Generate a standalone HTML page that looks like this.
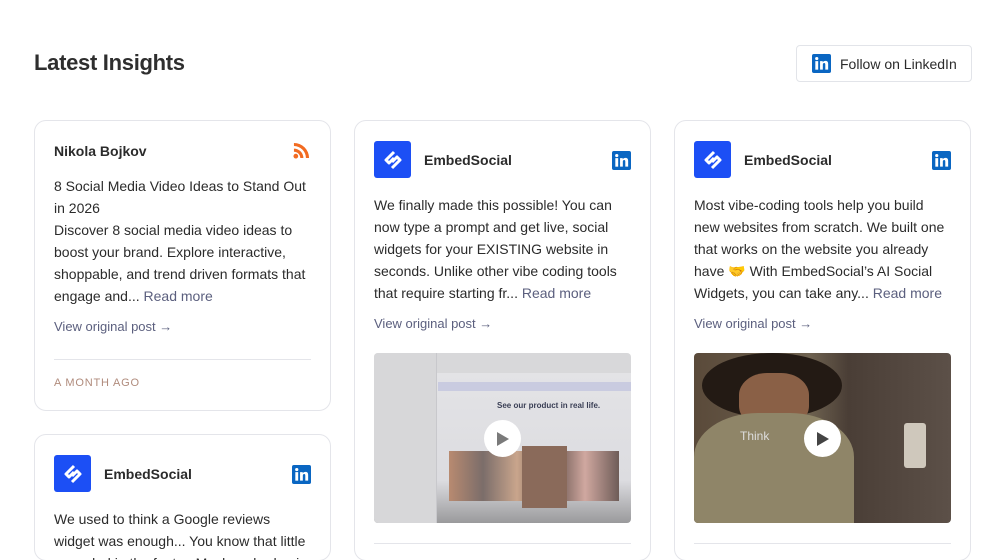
<!DOCTYPE html>
<html><head><meta charset="utf-8"><style>
*{box-sizing:border-box;margin:0;padding:0}
html,body{width:1000px;height:560px;overflow:hidden}
body{background:#fff;font-family:"Liberation Sans",Arial,sans-serif;color:#2b2b2b;position:relative}
.h{position:absolute;left:34px;top:50px;font-size:22px;font-weight:bold;color:#2e2e2e;letter-spacing:-0.3px}
.btn{position:absolute;left:796px;top:45px;width:176px;height:37px;border:1px solid #e2e4e9;border-radius:4px;display:flex;align-items:center;padding-left:15px;font-size:14px;color:#2b2b2b}
.btn svg{margin-right:9px}
.card{position:absolute;width:297px;border:1px solid #e4e5ea;border-radius:12px;background:#fff;overflow:hidden}
.name{position:absolute;font-size:14px;font-weight:bold;color:#2b2b2b}
.txt{position:absolute;left:19px;width:255px;font-size:14px;line-height:22px;color:#2b2b2b}
.rm{color:#5b5f7e}
.vo{position:absolute;left:19px;font-size:13px;color:#5b5f7e}
.div{position:absolute;left:19px;right:19px;height:1px;background:#e4e5ea}
.logo{position:absolute;left:19px;width:37px;height:37px;border-radius:3px;background:#1c4ff5;display:flex;align-items:center;justify-content:center}
.li{position:absolute;right:19px}
.img{position:absolute;left:19px;width:257px;height:170px;border-radius:4px;overflow:hidden}
.play{position:absolute;left:110px;top:67px;width:37px;height:37px;border-radius:50%;background:#fff;display:flex;align-items:center;justify-content:center}
</style></head><body>
<div class="h">Latest Insights</div>
<div class="btn"><svg width="19" height="19" viewBox="0 0 20 20"><rect width="20" height="20" rx="2" fill="#0a66c2"/><rect x="3.5" y="7.5" width="3" height="9" fill="#fff"/><circle cx="5" cy="4.8" r="1.7" fill="#fff"/><path d="M8.5 7.5h2.8v1.3c.5-.9 1.6-1.5 2.9-1.5 2.200 0 2.8 1.4 2.8 3.3v5.9h-3v-5.2c0-1-.2-1.8-1.2-1.8s-1.4.8-1.4 1.8v5.2h-2.9z" fill="#fff"/></svg>Follow on LinkedIn</div>

<div class="card" style="left:34px;top:120px;height:291px">
 <div class="name" style="left:19px;top:22px">Nikola Bojkov</div>
 <svg style="position:absolute;right:20px;top:21px" width="17" height="17" viewBox="0 0 18 18"><circle cx="3" cy="15" r="2.5" fill="#f26b21"/><path d="M1 7a10 10 0 0 1 10 10h-3.3A6.7 6.7 0 0 0 1 10.3z" fill="#f26b21"/><path d="M1 1a16 16 0 0 1 16 16h-3.3A12.7 12.7 0 0 0 1 4.3z" fill="#f26b21"/></svg>
 <div class="txt" style="top:54px">8 Social Media Video Ideas to Stand Out in 2026<br>Discover 8 social media video ideas to boost your brand. Explore interactive, shoppable, and trend driven formats that engage and... <span class="rm">Read more</span></div>
 <div class="vo" style="top:198px">View original post →</div>
 <div class="div" style="top:238px"></div>
 <div style="position:absolute;left:19px;top:256px;font-size:11px;letter-spacing:0.8px;color:#b08b7c">A MONTH AGO</div>
</div>

<div class="card" style="left:34px;top:434px;height:127px">
 <div class="logo" style="top:20px"><svg width="20" height="20" viewBox="0 0 20 20"><path d="M11 2L3 10l3 3 5-5 M9 18l8-8-3-3-5 5" stroke="#fff" stroke-width="3" fill="none" stroke-linejoin="round"/></svg></div>
 <div class="name" style="left:69px;top:31px">EmbedSocial</div>
 <svg class="li" style="top:30px" width="19" height="19" viewBox="0 0 20 20"><rect width="20" height="20" rx="2" fill="#0a66c2"/><rect x="3.5" y="7.5" width="3" height="9" fill="#fff"/><circle cx="5" cy="4.8" r="1.7" fill="#fff"/><path d="M8.5 7.5h2.8v1.3c.5-.9 1.6-1.5 2.9-1.5 2.2 0 2.8 1.4 2.8 3.3v5.9h-3v-5.2c0-1-.2-1.8-1.2-1.8s-1.4.8-1.4 1.8v5.2h-2.9z" fill="#fff"/></svg>
 <div class="txt" style="top:73px">We used to think a Google reviews widget was enough... You know that little snuggled in the footer. Maybe a badge in</div>
</div>

<div class="card" style="left:354px;top:120px;height:441px">
 <div class="logo" style="top:20px"><svg width="20" height="20" viewBox="0 0 20 20"><path d="M11 2L3 10l3 3 5-5 M9 18l8-8-3-3-5 5" stroke="#fff" stroke-width="3" fill="none" stroke-linejoin="round"/></svg></div>
 <div class="name" style="left:69px;top:31px">EmbedSocial</div>
 <svg class="li" style="top:30px" width="19" height="19" viewBox="0 0 20 20"><rect width="20" height="20" rx="2" fill="#0a66c2"/><rect x="3.5" y="7.5" width="3" height="9" fill="#fff"/><circle cx="5" cy="4.8" r="1.7" fill="#fff"/><path d="M8.5 7.5h2.8v1.3c.5-.9 1.6-1.5 2.9-1.5 2.2 0 2.8 1.4 2.8 3.3v5.9h-3v-5.2c0-1-.2-1.8-1.2-1.8s-1.4.8-1.4 1.8v5.2h-2.9z" fill="#fff"/></svg>
 <div class="txt" style="top:73px">We finally made this possible! You can now type a prompt and get live, social widgets for your EXISTING website in seconds. Unlike other vibe coding tools that require starting fr... <span class="rm">Read more</span></div>
 <div class="vo" style="top:195px">View original post →</div>
 <div class="img" style="top:232px;background:linear-gradient(#d8d8da 0,#d8d8da 20px,#e3e3e6 20px,#dcdce0 75%,#9a9a9c 100%)">
  <div style="position:absolute;left:0;top:0;width:63px;height:170px;background:#d7d7d9;border-right:1px solid #c8c8cc"></div>
  <div style="position:absolute;left:64px;top:29px;width:193px;height:9px;background:#c9cbe0"></div>
  <div style="position:absolute;left:123px;top:48px;font-size:8px;font-weight:bold;color:#3a3f55">See our product in real life.</div>
  <div style="position:absolute;left:75px;top:98px;width:170px;height:50px;background:linear-gradient(90deg,#b88a70,#7b6d6a,#c9a58c,#5a4a44,#d0a8a0,#6e5c58)"></div>
  <div style="position:absolute;left:148px;top:93px;width:45px;height:62px;background:#8a6a5a"></div>
  <div class="play"><svg width="14" height="16" viewBox="0 0 14 16"><path d="M1 1l12 7-12 7z" fill="#7a7a7a"/></svg></div>
 </div>
 <div class="div" style="top:422px"></div>
</div>

<div class="card" style="left:674px;top:120px;height:441px">
 <div class="logo" style="top:20px"><svg width="20" height="20" viewBox="0 0 20 20"><path d="M11 2L3 10l3 3 5-5 M9 18l8-8-3-3-5 5" stroke="#fff" stroke-width="3" fill="none" stroke-linejoin="round"/></svg></div>
 <div class="name" style="left:69px;top:31px">EmbedSocial</div>
 <svg class="li" style="top:30px" width="19" height="19" viewBox="0 0 20 20"><rect width="20" height="20" rx="2" fill="#0a66c2"/><rect x="3.5" y="7.5" width="3" height="9" fill="#fff"/><circle cx="5" cy="4.8" r="1.7" fill="#fff"/><path d="M8.5 7.5h2.8v1.3c.5-.9 1.6-1.5 2.9-1.5 2.2 0 2.8 1.4 2.8 3.3v5.9h-3v-5.2c0-1-.2-1.8-1.2-1.8s-1.4.8-1.4 1.8v5.2h-2.9z" fill="#fff"/></svg>
 <div class="txt" style="top:73px">Most vibe-coding tools help you build new websites from scratch. We built one that works on the website you already have 🤝 With EmbedSocial’s AI Social Widgets, you can take any... <span class="rm">Read more</span></div>
 <div class="vo" style="top:195px">View original post →</div>
 <div class="img" style="top:232px;background:linear-gradient(90deg,#5a4a3a 0%,#6e6250 45%,#4a3e36 60%,#5c5048 100%)">
  <div style="position:absolute;left:8px;top:0;width:140px;height:65px;border-radius:50%;background:#231a14"></div>
  <div style="position:absolute;left:45px;top:20px;width:70px;height:55px;border-radius:40%;background:#8a6046"></div>
  <div style="position:absolute;left:0;top:60px;width:160px;height:110px;border-radius:40% 40% 0 0;background:#8f8568"></div>
  <div style="position:absolute;left:210px;top:70px;width:22px;height:45px;background:#cfc8bc;border-radius:3px"></div>
  <div style="position:absolute;left:46px;top:76px;font-size:12px;color:#ddd">Think</div>
  <div class="play"><svg width="14" height="16" viewBox="0 0 14 16"><path d="M1 1l12 7-12 7z" fill="#444"/></svg></div>
 </div>
 <div class="div" style="top:422px"></div>
</div>
</body></html>
